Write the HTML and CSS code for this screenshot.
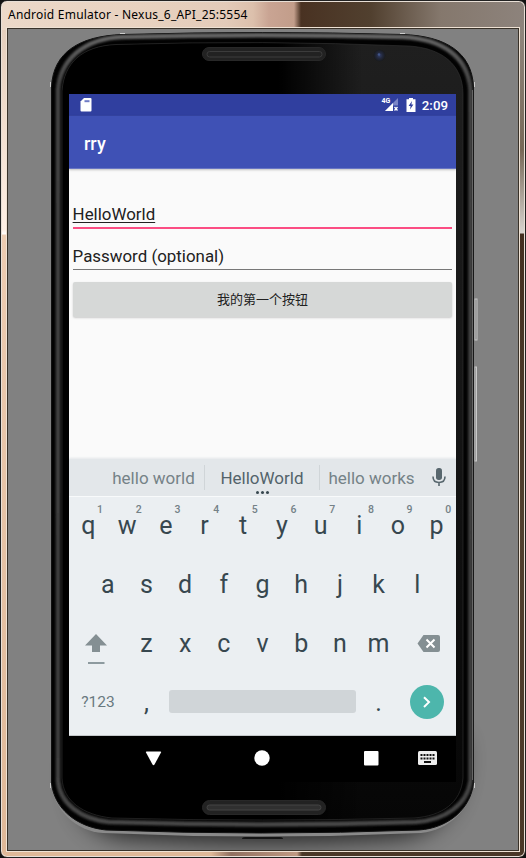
FILE: index.html
```html
<!DOCTYPE html>
<html lang="en">
<head>
<meta charset="utf-8">
<title>Android Emulator</title>
<link rel="stylesheet" href="styles.css">
</head>
<body>
<div class="window">
  <header class="titlebar"><span>Android Emulator - Nexus_6_API_25:5554</span></header>
  <main class="client">
    <svg class="phone" width="510" height="821" viewBox="8 29 510 821" aria-hidden="true">
      <defs>
        <filter id="soft" x="-20%" y="-20%" width="140%" height="140%"><feGaussianBlur stdDeviation="12"/></filter>
        <filter id="edge" x="-5%" y="-5%" width="110%" height="110%"><feGaussianBlur stdDeviation="1.3"/></filter>
        <clipPath id="body"><path d="M51.500 87C53 52 80 36 122 34.500Q262 30.500 403 34.500C445 36 472 52 473.500 87V783C471 808 449 828 419 830Q262 836 106 830C76 827 54 808 51.500 783Z"/></clipPath>
        <linearGradient id="glass" x1="0" y1="0" x2="0" y2="1">
          <stop offset="0" stop-color="#1f1f1f"/><stop offset=".45" stop-color="#161616"/><stop offset="1" stop-color="#060606"/>
        </linearGradient>
        <linearGradient id="shade" x1="0" y1="0" x2="1" y2="0">
          <stop offset="0" stop-color="#000"/><stop offset=".54" stop-color="#000"/><stop offset=".75" stop-color="#000" stop-opacity="0"/>
        </linearGradient>
        <linearGradient id="rim" x1="0" y1="0" x2="0" y2="1">
          <stop offset="0" stop-color="#666"/><stop offset=".06" stop-color="#444"/><stop offset=".9" stop-color="#404040"/><stop offset="1" stop-color="#484848"/>
        </linearGradient>
        <radialGradient id="lens"><stop offset="0" stop-color="#333f68"/><stop offset=".5" stop-color="#22283c"/><stop offset="1" stop-color="#191a1c"/></radialGradient>
      </defs>
      <path d="M80 740H460C466 800 440 832 400 837Q262 848 122 837C90 832 65 810 80 740Z" fill="#000" opacity=".75" filter="url(#soft)"/>
      <path d="M51 785C55 810 75 831 103 833Q262 840 421 833C450 830 470 808 474 785V770H51Z" fill="#8a8a8a"/>
      <path d="M51.500 87C53 52 80 36 122 34.500Q262 30.500 403 34.500C445 36 472 52 473.500 87V783C471 808 449 828 419 830Q262 836 106 830C76 827 54 808 51.500 783Z" fill="#020202" stroke="#111"/>
      <g clip-path="url(#body)"><path d="M58 90C60 60 84 38.500 122 37Q262 33.500 403 37C443 39 468 57 470.500 90V781C467 805 445 820 416 822Q262 827 109 822C80 819 60 803 58 781Z" fill="none" stroke="url(#rim)" stroke-width="4.500" filter="url(#edge)"/></g>
      <path d="M472.500 90V780" stroke="#666" stroke-width="1"/>
      <path d="M62 91C64 63 82 46 116 44.500Q262 40 409 46C441 48 463 64 463 94V778C461 803 442 816 414 818Q262 822 112 818C83 815 63 801 62 778Z" fill="url(#glass)"/>
      <path d="M62 91C64 63 82 46 116 44.500Q262 40 409 46C441 48 463 64 463 94V778C461 803 442 816 414 818Q262 822 112 818C83 815 63 801 62 778Z" fill="url(#shade)" stroke="#333" stroke-width=".6"/>
      <path d="M120 33.500h5M400 33.500h5M50.500 82v5M474.500 82v5M50.500 783v5M474.500 783v5" stroke="#ccc"/>
      <g fill="#222" stroke="#282828">
        <rect x="202.500" y="47.500" width="123" height="13" rx="6.500"/>
        <rect x="207" y="51.500" width="115" height="5.500" rx="2.700" stroke="#3c3c3c"/>
        <rect x="202.500" y="800.500" width="123" height="14" rx="7"/>
        <rect x="207" y="805" width="114" height="5" rx="2.500" fill="#303030" stroke="#444"/>
      </g>
      <circle cx="379.500" cy="55.500" r="6" fill="url(#lens)"/>
      <circle cx="379" cy="54.500" r="1.200" fill="#425589"/>
      <path d="M242 839q0-2 3-2h35q3 0 3 2z" fill="#151515"/>
      <g fill="#777" stroke="#c8c8c8"><rect x="475" y="299" width="2" height="41"/><rect x="475" y="367" width="1.500" height="94"/></g>
    </svg>

    <div class="screen">
      <div class="status">
        <svg width="12" height="14" viewBox="0 0 12 14"><path d="M4 0h6.500q1 0 1 1v11.500q0 1-1 1H1.500q-1 0-1-1V3.500Z" fill="#fff"/><path d="M4.500 2.200h5v2h-5z" fill="#6f7bc5"/></svg>
        <span class="grow"></span>
        <span class="signal"><b>4G</b><svg width="14" height="14" viewBox="0 0 14 14"><path d="M13 0V13H0Z" fill="#7b85c7"/><path d="M8 5v8H0Z" fill="#fff"/><path d="M8 7.500h6V14H8z" fill="#303f9f"/><path d="m9.500 9 3 3.500m0-3.500-3 3.500" stroke="#fff" stroke-width="1.300"/></svg></span>
        <svg class="battery" width="10" height="14" viewBox="0 0 10 14"><path d="M3 0h4v1.300h2.500V14H.5V1.300H3Z" fill="#fff"/><path d="M6 3 2.600 8h2L4 11.500 7.400 6.500h-2Z" fill="#303f9f"/></svg>
        <span class="clock">2:09</span>
      </div>
      <div class="appbar">rry</div>
      <section class="content">
        <div class="field focused"><u>HelloWorld</u></div>
        <div class="field second">Password (optional)</div>
        <div class="button">我的第一个按钮</div>
      </section>
      <div class="suggestions">
        <span class="word first">hello world</span>
        <span class="word main">HelloWorld<i class="dots"></i></span>
        <span class="word last">hello works</span>
        <svg width="16" height="20" viewBox="0 0 16 20"><rect x="5" y="0" width="6" height="12" rx="2.700" fill="#58676e"/><path d="M2 8.500q0 6 6 6t6-6M8 14.500V18" fill="none" stroke="#58676e" stroke-width="1.600"/></svg>
      </div>
      <div class="keyboard">
        <div class="row">
          <span class="key">q<sup>1</sup></span><span class="key">w<sup>2</sup></span><span class="key">e<sup>3</sup></span><span class="key">r<sup>4</sup></span><span class="key">t<sup>5</sup></span><span class="key">y<sup>6</sup></span><span class="key">u<sup>7</sup></span><span class="key">i<sup>8</sup></span><span class="key">o<sup>9</sup></span><span class="key">p<sup>0</sup></span>
        </div>
        <div class="row">
          <span class="key">a</span><span class="key">s</span><span class="key">d</span><span class="key">f</span><span class="key">g</span><span class="key">h</span><span class="key">j</span><span class="key">k</span><span class="key">l</span>
        </div>
        <div class="row">
          <span class="key wide"><svg class="shift" width="24" height="32" viewBox="0 0 24 32"><path d="M12 1 23 12.500H16V19H8V12.500H1Z" fill="#848f93"/><path d="M4 30h16.500" stroke="#8d9a9f" stroke-width="2"/></svg></span><span class="key">z</span><span class="key">x</span><span class="key">c</span><span class="key">v</span><span class="key">b</span><span class="key">n</span><span class="key">m</span><span class="key wide"><svg class="erase" width="24" height="18" viewBox="0 0 24 18"><path d="M6.500 0H21q2 0 2 2V15q0 2-2 2H6.500L.5 8.500Z" fill="#848f93"/><path d="m9.500 4.500 8 8m0-8-8 8" stroke="#fff" stroke-width="2"/></svg></span>
        </div>
        <div class="row bottom">
          <span class="key wide symbols">?123</span><span class="key punct">,</span><span class="space"></span><span class="key punct">.</span><span class="key wide"><span class="enter"><svg width="34" height="34" viewBox="0 0 34 34"><path d="m14 12.200 5 4.900-5 4.900" fill="none" stroke="#fff" stroke-width="2"/></svg></span></span>
        </div>
      </div>
      <div class="navbar">
        <svg width="387" height="46" viewBox="69 736 387 46"><path d="M146.500 751.500h14q1 0 .5 1l-6.500 12q-1 1.500-2 0l-6.500-12q-.5-1 .5-1" fill="#fff"/><circle cx="262" cy="758" r="7.700" fill="#fff"/><rect x="364" y="751" width="14.500" height="14.500" rx="1" fill="#fff"/><rect x="418" y="751" width="19" height="14" rx="1.500" fill="#eee"/><path d="M420.500 755h14M420.500 758.500h14" stroke="#111" stroke-width="2" stroke-dasharray="2 1"/><path d="M424 762h7" stroke="#111" stroke-width="2"/></svg>
      </div>
    </div>
  </main>
</div>
</body>
</html>
```
FILE: styles.css
```css
* { box-sizing: border-box; }
body { margin: 0; background: #111; }
svg { display: block; flex: none; }
.window {
  width: 526px; height: 858px; padding: 0 6px 6px 6px;
  border: 1px solid #222; border-radius: 7px;
  box-shadow: inset 0 0 0 1px #e8dfd6;
  background:
    linear-gradient(90deg, #ecd9c9 0, #e8d2c0 140px, #e3cbb9 225px, #dcc0ac 252px, #c9a493 268px, #c29d8a 293px, #493222 300px, #51402f 370px, #85786d 440px, #8d837c 100%) 0 0 / 100% 29px no-repeat,
    linear-gradient(#e5cfbd 0, #fff0e5 200px, #fff 204px, #edccb2 205px, #e5c2a5 520px, #dfb898 100%) 0 29px / 8px 820px no-repeat,
    linear-gradient(#8f867d 0, #776857 120px, #d8d4cf 203px, #432f20 204px, #51402f 60%, #4a3727 100%) 100% 29px / 8px 820px no-repeat,
    linear-gradient(90deg, #dfb898 0, #dfb898 210px, #917060 230px, #c09a83 296px, #4b3828 301px, #4a3727 100%) 0 100% / 100% 9px no-repeat;
}
.titlebar {
  height: 27px; padding: 0 1px; display: flex; align-items: center;
  font: 12px/27px "Noto Sans", sans-serif; letter-spacing: .22px; color: #000; white-space: nowrap;
}
.client {
  position: relative; width: 512px; height: 823px; border: 1px solid #393229;
  outline: 1px solid #efe2d4; background: #818181; padding: 65px 0 0 61px;
}
.phone { position: absolute; left: 0; top: 0; }
.screen { position: relative; width: 387px; height: 688px; font-family: Roboto, "Noto Sans CJK SC", sans-serif; color: #212121; background: #fafafa; display: flex; flex-direction: column; overflow: hidden; }
.status { height: 22px; background: #303f9f; color: #fff; display: flex; align-items: center; padding: 0 8px 0 10.5px; }
.grow { flex: 1; }
.signal { display: flex; }
.signal b { font-size: 7px; line-height: 7px; font-weight: 700; margin-right: -5px; z-index: 1; }
.battery { margin: 0 6px 0 6.5px; }
.clock { font-size: 13.3px; font-weight: 500; }
.appbar { height: 53px; padding: 0 15px; line-height: 55px; background: #3f51b5; color: #fff; font-size: 18px; font-weight: 500; border-bottom: 1px solid #6875c3; box-shadow: 0 1px 2px #9999; }
.content { height: 290px; padding: 28px 4px 0; }
.field { height: 32px; font-size: 16.9px; line-height: 34px; border-bottom: 1px solid #777; text-indent: -.4px; }
.focused { border-bottom: 2px solid #fb4d83; }
.focused u { text-underline-offset: 2px; text-decoration-thickness: 1px; text-decoration-skip-ink: none; }
.second { margin-top: 9px; height: 32px; line-height: 36px; }
.button { margin-top: 12px; height: 35px; border-radius: 2px; background: #d6d8d7; box-shadow: 0 1px 2px #aaa9; text-align: center; font-size: 13px; line-height: 36px; }
.suggestions { height: 38px; padding-left: 33px; display: flex; align-items: center; background: #e3e7ea; border-bottom: 1px solid #f8fafb; box-shadow: 0 -1px 2px #e3e7ea; font-size: 17px; color: #758287; }
.word { position: relative; height: 25px; line-height: 27px; text-align: center; }
.first { width: 102px; text-indent: 1px; }
.main { width: 116px; color: #53636a; border-left: 1px solid #d0d5d8; border-right: 1px solid #d0d5d8; }
.last { width: 103px; }
.suggestions svg { margin-left: 8px; }
.dots { position: absolute; left: 51px; bottom: -4px; width: 3px; height: 3px; border-radius: 50%; background: #37474f; box-shadow: 5px 0 #37474f, 10px 0 #37474f; }
.keyboard { height: 239px; background: #ebeff2; border-bottom: 1px solid #c4c8ca; color: #37474f; }
.row { height: 59px; display: flex; justify-content: center; align-items: center; }
.key { position: relative; width: 38.7px; text-align: center; font-size: 25px; line-height: 58px; height: 59px; }
.key sup { position: absolute; left: 28px; top: 7px; font-size: 10.5px; line-height: 12px; font-weight: 500; color: #748187; }
.wide { width: 58.05px; display: flex; align-items: center; justify-content: center; }
.shift { margin: 9px 4px 0 0; }
.erase { margin: 0 0 2px 4px; }
.bottom { margin-top: -2px; }
.symbols { font-size: 15.5px; color: #697980; line-height: 20px; }
.punct { line-height: 62px; }
.space { width: 187px; height: 23px; margin: 0 3.25px; border-radius: 3px; background: #d0d5d8; }
.enter { width: 34px; height: 34px; border-radius: 50%; background: #4db6ac; }
.navbar { height: 46px; background: #000; }
```
